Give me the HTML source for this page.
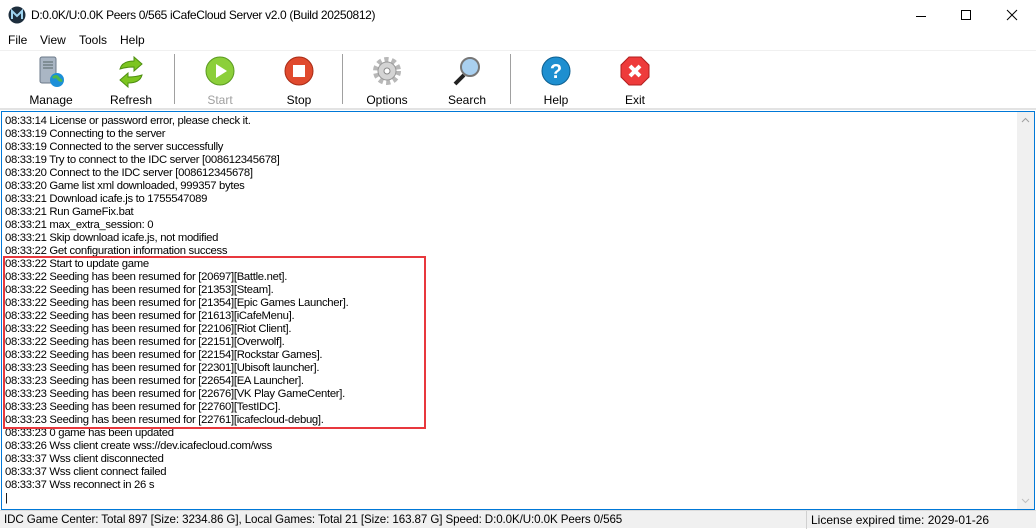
<!DOCTYPE html>
<html><head><style>
*{margin:0;padding:0;box-sizing:border-box}
body{width:1036px;height:528px;background:#fff;font-family:"Liberation Sans",sans-serif;position:relative;overflow:hidden}
.title{position:absolute;left:0;top:0;width:1036px;height:30px;background:#fff}
.title .t{position:absolute;left:31px;top:8px;font-size:12px;color:#000;letter-spacing:-0.35px}
.menu{position:absolute;top:33px;left:0;font-size:12px}
.menu span{position:absolute;top:0}
.tb{position:absolute;top:50px;left:0;width:1036px;height:60px;border-top:1px solid #f0f0f0;border-bottom:2px solid #e3e3e3}
.btn{position:absolute;top:4px;width:80px;text-align:center;font-size:12px}
.btn .ic{width:34px;height:34px;margin:0 auto}
.btn .lb{margin-top:4px}
.sep{position:absolute;top:3px;width:1px;height:50px;background:#a0a0a0}
.log{position:absolute;left:1px;top:111px;width:1034px;height:399px;border:1px solid #0078d7;background:#fff}
.txt{position:absolute;left:3px;top:3px;font-size:11.2px;line-height:13px;letter-spacing:-0.3px;white-space:pre;color:#000;transform:scaleX(1.01);transform-origin:0 0}
.sb{position:absolute;right:0;top:0;width:17px;height:397px;background:#f0f0f0}
.box{position:absolute;left:3px;top:256px;width:423px;height:173px;border:2px solid #e8383d}
.status{position:absolute;left:0;top:510px;width:1036px;height:18px;background:#f0f0f0;font-size:12px;border-top:1px solid #dcdcdc}
</style></head><body>
<div class="title">
<svg style="position:absolute;left:8px;top:6px" width="18" height="18" viewBox="0 0 18 18"><circle cx="9" cy="9" r="8.5" fill="#1d2e3d"/><path d="M4 13V5l5 5 5-5v8" stroke="#9fd4f0" stroke-width="2" fill="none"/></svg>
<div class="t">D:0.0K/U:0.0K Peers 0/565 iCafeCloud Server v2.0 (Build 20250812)</div>
<svg style="position:absolute;left:915px;top:10px" width="12" height="12"><path d="M1 6.5h10" stroke="#000"/></svg>
<svg style="position:absolute;left:960px;top:9px" width="12" height="12"><rect x="1.5" y="1.5" width="9" height="9" fill="none" stroke="#000"/></svg>
<svg style="position:absolute;left:1006px;top:9px" width="12" height="12"><path d="M1 1l10 10M11 1L1 11" stroke="#000"/></svg>
</div>
<div class="menu"><span style="left:8px">File</span><span style="left:40px">View</span><span style="left:79px">Tools</span><span style="left:120px">Help</span></div>
<div class="tb">
<div class="btn" style="left:11px"><div class="ic"><svg width="34" height="34"><rect x="6" y="2" width="16" height="26" rx="2" fill="#aab6c4" stroke="#6b7888"/><path d="M9 7h10M9 10h10M9 13h10" stroke="#566"/><circle cx="23" cy="25" r="7" fill="#1c8fd8"/><path d="M19 23q3-3 5 0t4 2" stroke="#4cb84c" stroke-width="3" fill="none"/></svg></div><div class="lb">Manage</div></div>
<div class="btn" style="left:91px"><div class="ic"><svg width="34" height="34"><path d="M6 14q2-8 14-8V2l8 7-8 7v-4q-8 0-14 2z" fill="#7cc520" stroke="#4e8f10"/><path d="M28 20q-2 8-14 8v4l-8-7 8-7v4q8 0 14-2z" fill="#7cc520" stroke="#4e8f10"/></svg></div><div class="lb">Refresh</div></div>
<div class="sep" style="left:174px"></div>
<div class="btn" style="left:180px"><div class="ic"><svg width="34" height="34"><circle cx="17" cy="16" r="14" fill="#8ccf3a" stroke="#5a9a20"/><path d="M13 9v14l11-7z" fill="#fff"/></svg></div><div class="lb" style="color:#a0a0a0">Start</div></div>
<div class="btn" style="left:259px"><div class="ic"><svg width="34" height="34"><circle cx="17" cy="16" r="14" fill="#e04a2e" stroke="#a82a14"/><rect x="11" y="10" width="12" height="12" fill="#fff"/></svg></div><div class="lb">Stop</div></div>
<div class="sep" style="left:342px"></div>
<div class="btn" style="left:347px"><div class="ic"><svg width="34" height="34"><circle cx="17" cy="16" r="11" fill="none" stroke="#b8b8b8" stroke-width="6" stroke-dasharray="4 3"/><circle cx="17" cy="16" r="9" fill="#d4d4d4" stroke="#999"/><circle cx="17" cy="16" r="3" fill="#fff" stroke="#888"/></svg></div><div class="lb">Options</div></div>
<div class="btn" style="left:427px"><div class="ic"><svg width="34" height="34"><path d="M14 20L5 29" stroke="#222" stroke-width="4"/><circle cx="20" cy="12" r="9" fill="#a9d0f0" stroke="#777" stroke-width="2"/></svg></div><div class="lb">Search</div></div>
<div class="sep" style="left:510px"></div>
<div class="btn" style="left:516px"><div class="ic"><svg width="34" height="34"><circle cx="17" cy="16" r="14" fill="#1e8fd0" stroke="#0d5f90"/><text x="17" y="23" text-anchor="middle" font-size="20" font-weight="bold" fill="#fff" font-family="Liberation Sans">?</text></svg></div><div class="lb">Help</div></div>
<div class="btn" style="left:595px"><div class="ic"><svg width="34" height="34"><path d="M11 2h12l8 8v12l-8 8H11l-8-8V10z" fill="#ee3b3b" stroke="#b01e1e"/><path d="M12 11l10 10M22 11L12 21" stroke="#fff" stroke-width="4"/></svg></div><div class="lb">Exit</div></div>
</div>
<div class="log">
<div class="txt">08:33:14 License or password error, please check it.
08:33:19 Connecting to the server
08:33:19 Connected to the server successfully
08:33:19 Try to connect to the IDC server [008612345678]
08:33:20 Connect to the IDC server [008612345678]
08:33:20 Game list xml downloaded, 999357 bytes
08:33:21 Download icafe.js to 1755547089
08:33:21 Run GameFix.bat
08:33:21 max_extra_session: 0
08:33:21 Skip download icafe.js, not modified
08:33:22 Get configuration information success
08:33:22 Start to update game
08:33:22 Seeding has been resumed for [20697][Battle.net].
08:33:22 Seeding has been resumed for [21353][Steam].
08:33:22 Seeding has been resumed for [21354][Epic Games Launcher].
08:33:22 Seeding has been resumed for [21613][iCafeMenu].
08:33:22 Seeding has been resumed for [22106][Riot Client].
08:33:22 Seeding has been resumed for [22151][Overwolf].
08:33:22 Seeding has been resumed for [22154][Rockstar Games].
08:33:23 Seeding has been resumed for [22301][Ubisoft launcher].
08:33:23 Seeding has been resumed for [22654][EA Launcher].
08:33:23 Seeding has been resumed for [22676][VK Play GameCenter].
08:33:23 Seeding has been resumed for [22760][TestIDC].
08:33:23 Seeding has been resumed for [22761][icafecloud-debug].
08:33:23 0 game has been updated
08:33:26 Wss client create wss://dev.icafecloud.com/wss
08:33:37 Wss client disconnected
08:33:37 Wss client connect failed
08:33:37 Wss reconnect in 26 s
|</div>
<div class="sb"><svg style="position:absolute;left:4px;top:5px" width="9" height="6"><path d="M1 5l3.5-3.5L8 5" stroke="#a0a0a0" fill="none"/></svg><svg style="position:absolute;left:4px;bottom:5px" width="9" height="6"><path d="M1 1l3.5 3.5L8 1" stroke="#c0c0c0" fill="none"/></svg></div>
</div>
<div class="box"></div>
<div class="status"><span style="position:absolute;left:4px;top:2px;font-size:11.6px;letter-spacing:-0.1px">IDC Game Center: Total 897 [Size: 3234.86 G], Local Games: Total 21 [Size: 163.87 G] Speed: D:0.0K/U:0.0K Peers 0/565</span><div style="position:absolute;left:806px;top:0;width:1px;height:18px;background:#d0d0d0"></div><span style="position:absolute;left:811px;top:2px">License expired time: 2029-01-26</span></div>
</body></html>
